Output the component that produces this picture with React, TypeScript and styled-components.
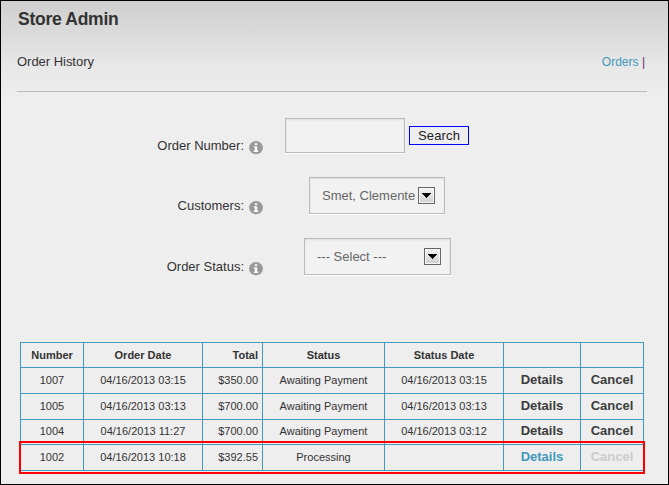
import React from "react";
import styled, { createGlobalStyle } from "styled-components";

const GlobalStyle = createGlobalStyle`
  body { margin: 0; }
  * { box-sizing: border-box; }
`;

const Page = styled.main`
  position: relative;
  width: 669px;
  height: 485px;
  border: 1px solid #000;
  padding: 0 21px 0 16px;
  color: #333;
  font: 13px/16px "Liberation Sans", Arial, sans-serif;
  background: linear-gradient(#cfcfcf 0, #dadada 30px, #e8e8e8 65px, #eee 100px);
`;

const Title = styled.h1`
  margin: 0;
  padding: 8px 0 0 1px;
  height: 53px;
  font-size: 17.5px;
  line-height: 20px;
  letter-spacing: -0.27px;
`;

const SubHeader = styled.header`
  display: flex;
  justify-content: space-between;
  height: 38px;
  padding: 0 2px 0 0;
  margin-bottom: 26px;
  border-bottom: 1px solid #bbb;
`;

const Heading = styled.h2`
  margin: 0;
  font: inherit;
  letter-spacing: -0.03px;
`;

const Nav = styled.nav`
  color: #602f6b;
  font-size: 12px;
`;

const Link = styled.a`
  color: #4298b8;
`;

const FormRow = styled.div<{ $height: number; $offset: number }>`
  display: flex;
  align-items: flex-start;
  height: ${(p) => p.$height}px;
  > :nth-child(2) { margin-left: ${(p) => p.$offset}px; }
`;

const Label = styled.label<{ $top: number }>`
  display: flex;
  justify-content: flex-end;
  gap: 5px;
  width: 246px;
  padding-top: ${(p) => p.$top}px;
  svg { margin-top: 3px; flex: none; }
`;

const TextInput = styled.input`
  width: 120px;
  height: 35px;
  border: 1px solid #bbb;
  border-radius: 0;
  background: #f2f2f2;
  box-shadow: inset 0 1px 2px #ddd, 0 1px 0 #fff;
  outline: none;
`;

const SearchButton = styled.button`
  width: 60px;
  height: 19px;
  margin: 8px 0 0 4px;
  padding: 0;
  border: 1px solid #00f;
  background: #eee;
  color: #222;
  font: 13px/17px "Liberation Sans", Arial, sans-serif;
  letter-spacing: 0.15px;
`;

const Select = styled.div<{ $width: number }>`
  display: flex;
  align-items: center;
  justify-content: space-between;
  width: ${(p) => p.$width}px;
  height: 37px;
  padding: 0 9px 0 12px;
  border: 1px solid #bbb;
  background: #f2f2f2;
  box-shadow: inset 0 1px 2px #ddd, 0 1px 0 #fff;
  color: #666;
  white-space: nowrap;
`;

const Arrow = styled.span`
  display: grid;
  place-items: center;
  flex: none;
  width: 17px;
  height: 17px;
  border: 1px solid #666;
  background: linear-gradient(#f5f5f5, #cfcfcf);
  box-shadow: inset 0 0 0 1px #f6f6f6;
`;

const Table = styled.div`
  position: relative;
  display: grid;
  grid-template-columns: 62px 118px 59px 121px 118px 76px 62px;
  grid-template-rows: 24px 25px 25px 24px 25px;
  gap: 1px;
  width: 624px;
  margin: 41px 0 0 3px;
  border: 1px solid #4298be;
  background: #4298be;
  font-size: 11px;
`;

const Cell = styled.div<{ $head?: boolean; $right?: boolean }>`
  display: flex;
  align-items: center;
  justify-content: ${(p) => (p.$right ? "flex-end" : "center")};
  padding-right: ${(p) => (p.$right ? 4 : 0)}px;
  padding-bottom: ${(p) => (p.$head ? 0 : 2)}px;
  background: #eee;
  font-weight: ${(p) => (p.$head ? "bold" : "normal")};
  white-space: nowrap;
`;

const Action = styled.a<{ $color: string }>`
  color: ${(p) => p.$color};
  font-size: 13px;
  font-weight: bold;
`;

const Highlight = styled.div`
  position: absolute;
  left: -2px;
  top: 98px;
  width: 626px;
  height: 33px;
  border: 2px solid #f00;
`;

const InfoIcon = () => (
  <svg width="14" height="14" viewBox="0 0 14 14" aria-hidden="true">
    <ellipse cx="7" cy="6.6" rx="7" ry="6.6" fill="#999" />
    <path d="M5.8 2.2h2.4v1.9H5.8zM4.8 5.2h3.4v4.4h1v1.3H4.8V9.6h1V6.5h-1z" fill="#fff" />
  </svg>
);

const DropArrow = () => (
  <Arrow>
    <svg width="9" height="5" viewBox="0 0 9 5" shapeRendering="crispEdges">
      <path d="M0 0h9v1H8v1H7v1H6v1H5v1H4V4H3V3H2V2H1V1H0z" fill="#000" />
    </svg>
  </Arrow>
);

const headers = ["Number", "Order Date", "Total", "Status", "Status Date", "", ""];
const orders = [
  { cells: ["1007", "04/16/2013 03:15", "$350.00", "Awaiting Payment", "04/16/2013 03:15"], open: false },
  { cells: ["1005", "04/16/2013 03:13", "$700.00", "Awaiting Payment", "04/16/2013 03:13"], open: false },
  { cells: ["1004", "04/16/2013 11:27", "$700.00", "Awaiting Payment", "04/16/2013 03:12"], open: false },
  { cells: ["1002", "04/16/2013 10:18", "$392.55", "Processing", ""], open: true },
];

export default function App() {
  return (
    <Page>
      <GlobalStyle />
      <Title>Store Admin</Title>
      <SubHeader>
        <Heading>Order History</Heading>
        <Nav><Link>Orders</Link> |</Nav>
      </SubHeader>
      <FormRow $height={59} $offset={22}>
        <Label $top={20}>Order Number:<InfoIcon /></Label>
        <TextInput />
        <SearchButton>Search</SearchButton>
      </FormRow>
      <FormRow $height={61} $offset={46}>
        <Label $top={21}>Customers:<InfoIcon /></Label>
        <Select $width={136}>Smet, Clemente<DropArrow /></Select>
      </FormRow>
      <FormRow $height={63} $offset={41}>
        <Label $top={21}>Order Status:<InfoIcon /></Label>
        <Select $width={147}>--- Select ---<DropArrow /></Select>
      </FormRow>
      <Table>
        {headers.map((h, i) => <Cell key={i} $head $right={i === 2}>{h}</Cell>)}
        {orders.map((o) => (
          <React.Fragment key={o.cells[0]}>
            {o.cells.map((c, i) => <Cell key={i} $right={i === 2}>{c}</Cell>)}
            <Cell><Action $color={o.open ? "#4298b8" : "#3c3c3c"}>Details</Action></Cell>
            <Cell><Action $color={o.open ? "#ccc" : "#3c3c3c"}>Cancel</Action></Cell>
          </React.Fragment>
        ))}
        <Highlight />
      </Table>
    </Page>
  );
}
